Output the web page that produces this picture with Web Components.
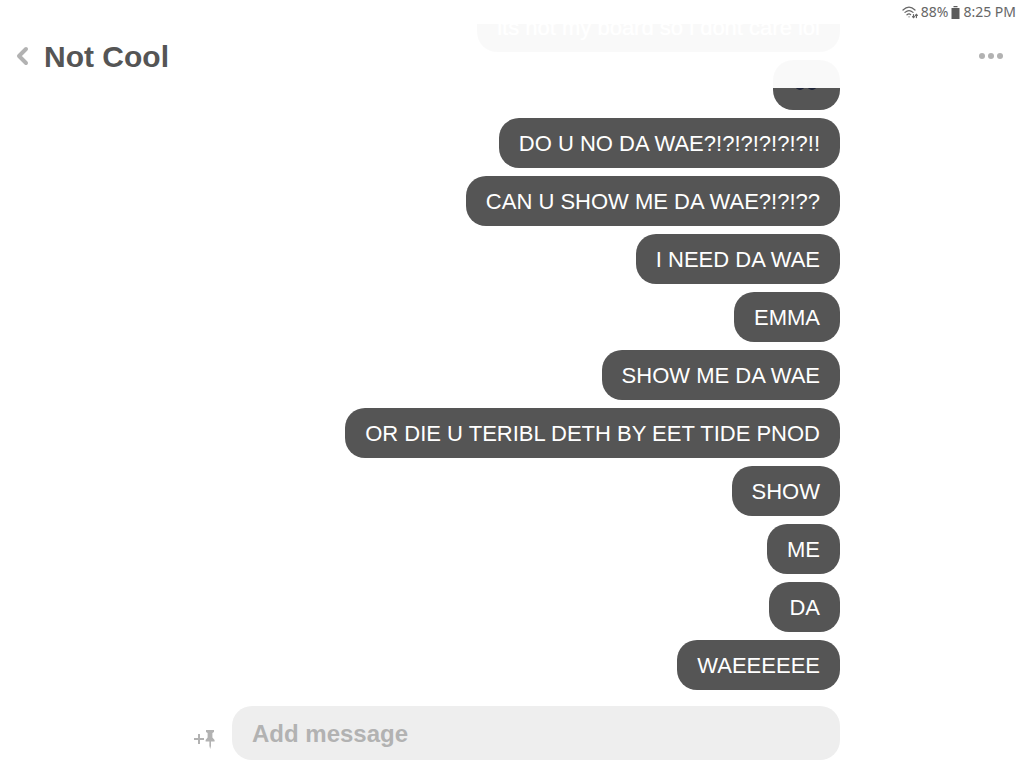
<!DOCTYPE html>
<html lang="en">
<head>
<meta charset="utf-8">
<title>Not Cool</title>
<style>
html, body { height: 100%; margin: 0; background: #fff; }
body { font-family: "Liberation Sans", Arial, sans-serif; }
</style>
</head>
<body>
<chat-app></chat-app>
<script>
class BaseElement extends HTMLElement {
  connectedCallback() {
    if (!this.shadowRoot) this.attachShadow({ mode: "open" }).innerHTML = this.render();
  }
}

customElements.define("status-bar", class extends BaseElement {
  render() {
    return `<style>
      :host { display: flex; justify-content: flex-end; align-items: center; gap: 3px; height: 24px; box-sizing: border-box; padding-right: 8px;
        background: #fff; color: #666; font: 14px/24px "Noto Sans", sans-serif; }
      svg { display: block; }
    </style>
    <svg width="16" height="14" viewBox="0 0 16 14" fill="none" stroke="#666" stroke-width="1.2" stroke-linecap="round">
      <path d="M1 5Q7-.8 13 5M3 7.4Q7 4 11 7.4M5 9.8Q7 8 8.6 9.6M7 11.8h.1M11.5 9.5v3M10.5 11.6l1 1 1-1M14.4 12.6v-3M13.4 10.4l1-1 1 1"/>
    </svg>
    <span>88%</span>
    <svg width="9" height="13" viewBox="0 0 9 13" fill="#5c5c5c"><path d="M2.5 0h4v1.3h-4zM.5 2h8v11h-8z"/></svg>
    <span>8:25 PM</span>`;
  }
});

customElements.define("chat-header", class extends BaseElement {
  render() {
    return `<style>
      :host { display: flex; align-items: center; height: 64px; box-sizing: border-box; padding: 0 17px 0 12px; background: rgba(255,255,255,.97); }
      button { border: 0; margin: 0; padding: 0; background: none; display: grid; place-items: center; height: 40px; }
      .back { width: 20px; }
      .more { width: 32px; margin-left: auto; }
      h1 { margin: 0 0 0 12px; padding-top: 2px; font-size: 30px; line-height: 40px; font-weight: 700; color: #555; }
    </style>
    <button class="back" aria-label="Back"><svg width="20" height="20" viewBox="0 0 20 20" fill="none" stroke="#b2b2b2" stroke-width="4" stroke-linecap="round" stroke-linejoin="round"><path d="M14 3L7 10l7 7"/></svg></button>
    <h1><slot></slot></h1>
    <button class="more" aria-label="More options"><svg width="26" height="8" viewBox="0 0 26 8" fill="#b2b2b2"><circle cx="4" cy="4" r="3"/><circle cx="13" cy="4" r="3"/><circle cx="22" cy="4" r="3"/></svg></button>`;
  }
});

customElements.define("chat-bubble", class extends BaseElement {
  render() {
    return `<style>
      :host { display: block; flex: none; box-sizing: border-box; height: 50px; padding: 0 20px; border-radius: 20px;
        background: #555; color: #fff; font-size: 22px; line-height: 52px; white-space: nowrap; }
      ::slotted(svg) { display: block; }
    </style><slot></slot>`;
  }
});

customElements.define("message-list", class extends BaseElement {
  render() {
    return `<style>
      :host { display: flex; flex-direction: column; justify-content: flex-end; align-items: flex-end; gap: 8px;
        flex: 1; min-height: 0; overflow: hidden; }
    </style><slot></slot>`;
  }
});

customElements.define("message-composer", class extends BaseElement {
  render() {
    return `<style>
      :host { display: flex; align-items: center; padding: 16px 0 8px; }
      button { border: 0; margin: 0; padding: 12px 0 0 8px; width: 48px; box-sizing: border-box; background: none; text-align: left; }
      svg { display: block; }
      input { flex: 1; min-width: 0; height: 54px; box-sizing: border-box; padding: 2px 20px 0; border: 0; border-radius: 20px;
        background: #eee; color: #555; font: 700 24px "Liberation Sans", Arial, sans-serif; }
      input::placeholder { color: #b2b2b2; opacity: 1; }
    </style>
    <button aria-label="Add a pin"><svg width="24" height="22" viewBox="0 0 24 22" fill="#b2b2b2"><path d="M6 6h2v4h4v2H8v4H6v-4H2v-2h4zM14 2h8v2l-1.6 1v4.4L22.6 12v1.4H19V18l-.8 3-.8-3v-4.6h-3.8V12l2-2.6V5L14 4z"/></svg></button>
    <input type="text" placeholder="Add message" aria-label="Add message">`;
  }
});

customElements.define("chat-app", class extends BaseElement {
  render() {
    return `<style>
      :host { display: block; position: relative; height: 100%; }
      .top { position: absolute; top: 0; left: 0; right: 0; }
      main { display: flex; flex-direction: column; height: 100%; max-width: 656px; margin: 0 auto; }
    </style>
    <main>
      <message-list>
        <chat-bubble>its not my board so i dont care lol</chat-bubble>
        <chat-bubble><svg width="27" height="50" viewBox="0 0 27 50" role="img" aria-label="Eyes"><g fill="#1e2438"><ellipse cx="7" cy="25" rx="5" ry="5"/><ellipse cx="19" cy="25" rx="5" ry="5"/></g></svg></chat-bubble>
        <chat-bubble>DO U NO DA WAE?!?!?!?!?!?!!</chat-bubble>
        <chat-bubble>CAN U SHOW ME DA WAE?!?!??</chat-bubble>
        <chat-bubble>I NEED DA WAE</chat-bubble>
        <chat-bubble>EMMA</chat-bubble>
        <chat-bubble>SHOW ME DA WAE</chat-bubble>
        <chat-bubble>OR DIE U TERIBL DETH BY EET TIDE PNOD</chat-bubble>
        <chat-bubble>SHOW</chat-bubble>
        <chat-bubble>ME</chat-bubble>
        <chat-bubble>DA</chat-bubble>
        <chat-bubble>WAEEEEEE</chat-bubble>
      </message-list>
      <message-composer></message-composer>
    </main>
    <div class="top"><status-bar></status-bar><chat-header>Not Cool</chat-header></div>`;
  }
});
</script>
</body>
</html>
